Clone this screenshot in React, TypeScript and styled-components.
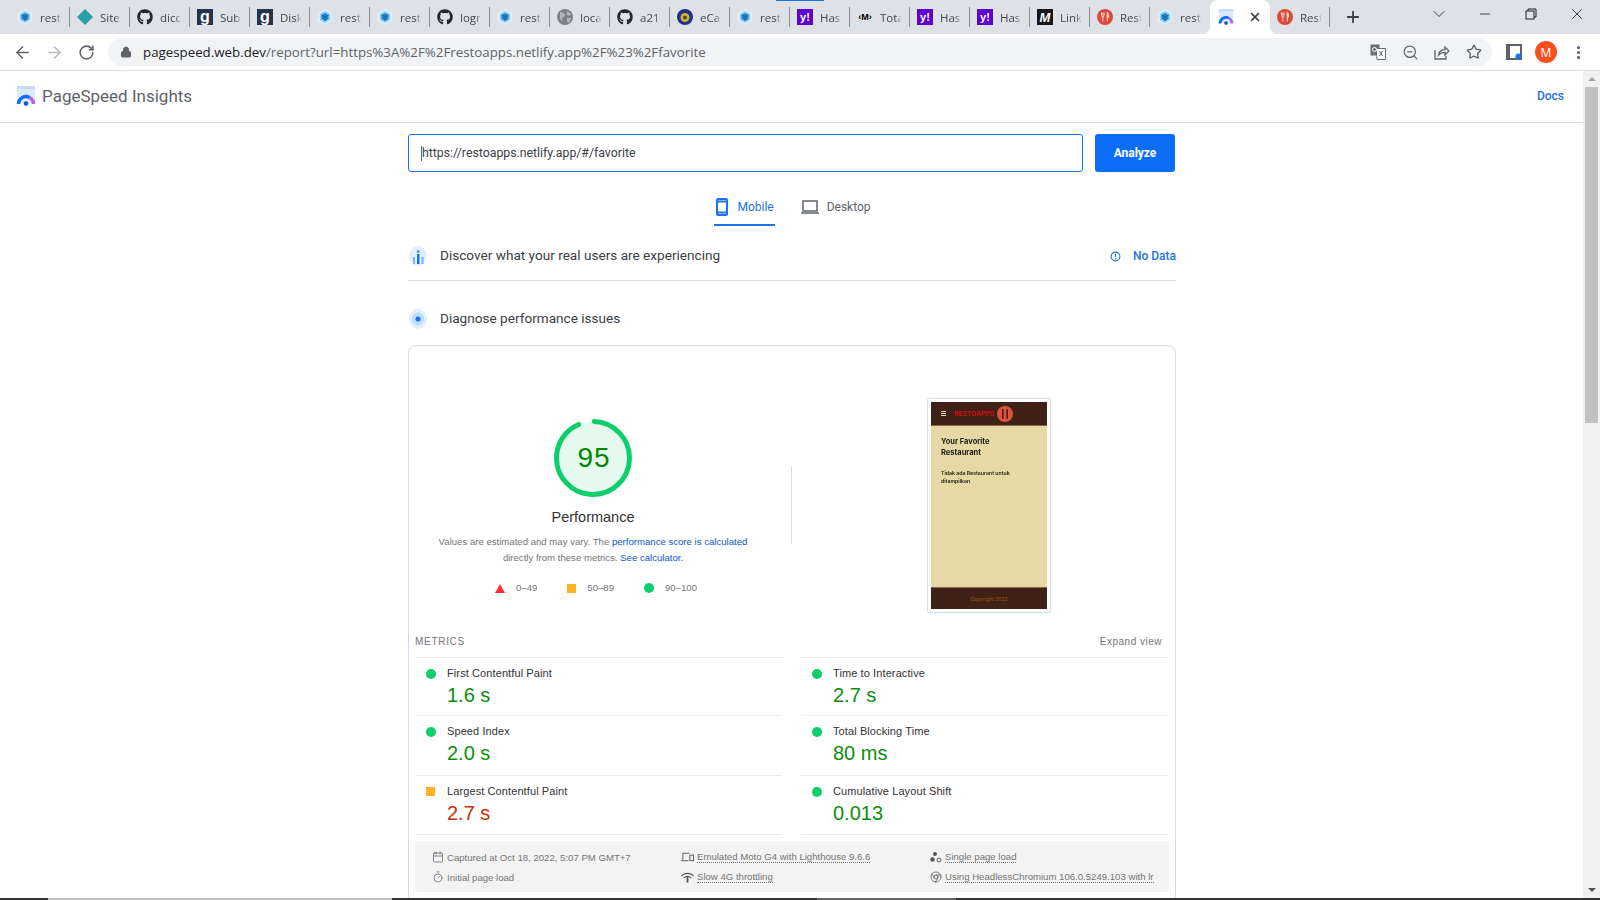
import styled, { createGlobalStyle } from "styled-components";
import { ArrowLeft, ArrowRight, Calendar, Chrome, ChevronDown, Lock, Minus, MoreVertical, Plus, RotateCw, Star, Timer, X, ZoomOut } from "lucide-react";
import { FaGithub } from "react-icons/fa";

const GlobalStyle = createGlobalStyle`
  html, body {
    margin: 0;
    padding: 0;
    overflow: hidden;
    background: #fff;
  }
  * {
    box-sizing: border-box;
  }
`;

type IconKind = "hex" | "diamond" | "github" | "g" | "globe" | "emblem" | "yahoo" | "tag" | "medium" | "resto";

const tabs: { icon: IconKind; label: string }[] = [
  { icon: "hex", label: "rest" },
  { icon: "diamond", label: "Site" },
  { icon: "github", label: "dicc" },
  { icon: "g", label: "Sub" },
  { icon: "g", label: "Disk" },
  { icon: "hex", label: "rest" },
  { icon: "hex", label: "rest" },
  { icon: "github", label: "logr" },
  { icon: "hex", label: "rest" },
  { icon: "globe", label: "loca" },
  { icon: "github", label: "a21" },
  { icon: "emblem", label: "eCa" },
  { icon: "hex", label: "rest" },
  { icon: "yahoo", label: "Has" },
  { icon: "tag", label: "Tota" },
  { icon: "yahoo", label: "Has" },
  { icon: "yahoo", label: "Has" },
  { icon: "medium", label: "Link" },
  { icon: "resto", label: "Rest" },
  { icon: "hex", label: "rest" },
];

function Favicon({ kind }: { kind: IconKind }) {
  switch (kind) {
    case "hex":
      return (
        <svg width="16" height="16" viewBox="0 0 16 16">
          <path d="M8 0l7 4v8l-7 4-7-4V4z" fill="#e3f4fd" />
          <path d="M8 1.800l5.400 3.100v6.200L8 14.200l-5.400-3.100V4.900z" fill="#8ed6fb" />
          <path d="M8 4l3.500 2v4L8 12l-3.500-2V6z" fill="#2a7fc6" />
          <path d="M4.500 6L8 8l3.500-2M8 8v4" fill="none" stroke="#13609f" strokeWidth="0.800" />
        </svg>
      );
    case "diamond":
      return (
        <svg width="16" height="16" viewBox="0 0 16 16">
          <path d="M8 0l8 8-8 8-8-8z" fill="#2b9fa8" />
        </svg>
      );
    case "github":
      return <FaGithub size={16} color="#24292f" />;
    case "g":
      return <GlyphSquare $bg="#25344b" $size={16}>g</GlyphSquare>;
    case "globe":
      return (
        <svg width="16" height="16" viewBox="0 0 16 16">
          <circle cx="8" cy="8" r="8" fill="#7d8084" />
          <path d="M3 3l4 1 1 3-3 2 1 4-3-3zM10 2l4 3-2 2-2-1zM10 9l4 0-2 5-2-1z" fill="#b5b7ba" />
        </svg>
      );
    case "emblem":
      return (
        <svg width="16" height="16" viewBox="0 0 16 16">
          <circle cx="8" cy="8" r="8" fill="#1d2f8f" />
          <circle cx="8" cy="8.500" r="4.500" fill="#d9b227" />
          <circle cx="8" cy="8.500" r="2" fill="#47502e" />
        </svg>
      );
    case "yahoo":
      return <GlyphSquare $bg="#5f01d1" $size={11}>y!</GlyphSquare>;
    case "tag":
      return <TagGlyph>‹M›</TagGlyph>;
    case "medium":
      return <GlyphSquare $bg="#15151a" $size={13} $italic>M</GlyphSquare>;
    case "resto":
      return (
        <svg width="16" height="16" viewBox="0 0 16 16">
          <circle cx="8" cy="8" r="8" fill="#dc4a38" />
          <path d="M5.800 3.500v9M4.500 3.500v3c0 1 .6 1.500 1.300 1.500s1.300-.5 1.300-1.500v-3" fill="none" stroke="#f6dfd6" strokeWidth="0.900" />
          <path d="M10.300 12.500v-9c1 .5 1.300 2 1.300 4.500h-1.300" fill="none" stroke="#f6dfd6" strokeWidth="1.100" />
        </svg>
      );
  }
}

function PsiLogo({ size }: { size: number }) {
  return (
    <svg width={size} height={size} viewBox="0 0 20 20">
      <rect x="1" y="0" width="18" height="17" rx="1.500" fill="#dcebfb" />
      <rect x="1" y="0" width="18" height="3" fill="#c6dcf5" />
      <path d="M2.500 18a7.500 7.500 0 0 1 11-6.600" fill="none" stroke="#0d6efd" strokeWidth="3.400" />
      <path d="M13.500 11.400a7.500 7.500 0 0 1 4 6.600" fill="none" stroke="#b264e8" strokeWidth="3.400" />
      <circle cx="10" cy="17.500" r="2.300" fill="#0b57d0" />
    </svg>
  );
}

function Gauge() {
  const r = 36.5;
  const c = 2 * Math.PI * r;
  return (
    <GaugeBox>
      <svg width="78" height="78" viewBox="0 0 78 78">
        <circle cx="39" cy="39" r={r} fill="#e6f9ef" />
        <circle
          cx="39"
          cy="39"
          r={r}
          fill="none"
          stroke="#0cce6b"
          strokeWidth="5"
          strokeLinecap="round"
          strokeDasharray={`${c * 0.95 - 5} ${c}`}
          transform="rotate(-88 39 39)"
        />
      </svg>
      <GaugeScore>95</GaugeScore>
    </GaugeBox>
  );
}

function Marker({ kind }: { kind: "pass" | "average" }) {
  return kind === "pass" ? <Dot /> : <Square />;
}

const metrics: { name: string; value: string; kind: "pass" | "average" }[] = [
  { name: "First Contentful Paint", value: "1.6 s", kind: "pass" },
  { name: "Time to Interactive", value: "2.7 s", kind: "pass" },
  { name: "Speed Index", value: "2.0 s", kind: "pass" },
  { name: "Total Blocking Time", value: "80 ms", kind: "pass" },
  { name: "Largest Contentful Paint", value: "2.7 s", kind: "average" },
  { name: "Cumulative Layout Shift", value: "0.013", kind: "pass" },
];

export default function App() {
  return (
    <Frame>
      <GlobalStyle />
      <TabStrip>
        <LoadingBar />
        {tabs.map((t, i) => (
          <Tab key={i} $noSep={i === tabs.length - 1}>
            <FaviconBox>
              <Favicon kind={t.icon} />
            </FaviconBox>
            <TabLabel>{t.label}</TabLabel>
          </Tab>
        ))}
        <ActiveTab>
          <FaviconBox>
            <PsiLogo size={18} />
          </FaviconBox>
          <X size={14} strokeWidth={3} color="#3c4043" />
        </ActiveTab>
        <Tab>
          <FaviconBox>
            <Favicon kind="resto" />
          </FaviconBox>
          <TabLabel>Rest</TabLabel>
        </Tab>
        <NewTab>
          <Plus size={18} strokeWidth={2.4} color="#3c4043" />
        </NewTab>
        <Grow />
        <WinButton>
          <ChevronDown size={20} strokeWidth={1.2} color="#3c4043" />
        </WinButton>
        <WinButton>
          <Minus size={16} strokeWidth={1.2} color="#202124" />
        </WinButton>
        <WinButton>
          <svg width="12" height="12" viewBox="0 0 12 12" fill="none" stroke="#202124">
            <rect x="1" y="3" width="8" height="8" />
            <path d="M3 3V1h8v8H9" />
          </svg>
        </WinButton>
        <WinButton>
          <X size={18} strokeWidth={1.1} color="#202124" />
        </WinButton>
      </TabStrip>

      <Toolbar>
        <ToolButton>
          <ArrowLeft size={19} color="#5f6368" strokeWidth={2} />
        </ToolButton>
        <ToolButton>
          <ArrowRight size={19} color="#b8babd" strokeWidth={2} />
        </ToolButton>
        <ToolButton>
          <RotateCw size={17} color="#5f6368" strokeWidth={2.200} />
        </ToolButton>
        <Omnibox>
          <Lock size={12} color="#5f6368" fill="#5f6368" />
          <UrlText>
            pagespeed.web.dev<UrlRest>/report?url=https%3A%2F%2Frestoapps.netlify.app%2F%23%2Ffavorite</UrlRest>
          </UrlText>
          <Grow />
          <ToolButton>
            <svg width="16" height="16" viewBox="0 0 16 16">
              <rect x="0.500" y="0.500" width="9" height="11" fill="#6b6e72" />
              <path d="M6 4.500h9.500v11H7z" fill="#fff" stroke="#6b6e72" />
              <path d="M9.500 7l3 5M12.500 7l-3 5" stroke="#6b6e72" />
              <circle cx="4.500" cy="5.500" r="2" fill="none" stroke="#fff" />
            </svg>
          </ToolButton>
          <ToolButton>
            <ZoomOut size={17} color="#5f6368" strokeWidth={1.7} />
          </ToolButton>
          <ToolButton>
            <svg width="16" height="16" viewBox="0 0 16 16" fill="none" stroke="#5f6368" strokeWidth="1.300">
              <path d="M1 6v9h11v-3" />
              <path d="M4.500 11c.5-3.500 3-5.300 6.500-5.300V3l4 4-4 4V8.300c-3 0-5 .8-6.500 2.700z" />
            </svg>
          </ToolButton>
          <ToolButton>
            <Star size={16} color="#5f6368" strokeWidth={2} />
          </ToolButton>
        </Omnibox>
        <ProfileArea>
          <ToolButton>
            <svg width="16" height="16" viewBox="0 0 16 16">
              <rect x="1" y="1" width="14" height="14" fill="none" stroke="#5f6368" strokeWidth="2" />
              <rect x="0" y="0" width="4" height="16" fill="#5f6368" />
              <circle cx="12.500" cy="12.500" r="3" fill="#1a73e8" />
            </svg>
          </ToolButton>
          <ToolButton>
            <Avatar>M</Avatar>
          </ToolButton>
          <ToolButton>
            <MoreVertical size={17} color="#5f6368" strokeWidth={2.500} />
          </ToolButton>
        </ProfileArea>
      </Toolbar>

      <Viewport>
        <Page>
          <Header>
            <PsiLogo size={20} />
            <Brand>PageSpeed Insights</Brand>
            <Grow />
            <DocsLink>Docs</DocsLink>
          </Header>
          <Content>
            <SearchRow>
              <SearchBox>
                <Caret />
                https://restoapps.netlify.app/#/favorite
              </SearchBox>
              <AnalyzeButton>Analyze</AnalyzeButton>
            </SearchRow>
            <DeviceTabs>
              <DeviceTab $active>
                <svg width="14" height="18" viewBox="0 0 14 18" fill="none" stroke="#1a73e8" strokeWidth="2">
                  <rect x="2" y="1" width="10" height="16" rx="1" />
                  <path d="M2 3.500h10M2 14.500h10" />
                </svg>
                Mobile
              </DeviceTab>
              <DeviceTab>
                <svg width="18" height="14" viewBox="0 0 18 14" fill="none" stroke="#5f6368" strokeWidth="1.500">
                  <rect x="2" y="1" width="14" height="10" />
                  <path d="M0 13h18" />
                </svg>
                Desktop
              </DeviceTab>
            </DeviceTabs>

            <SectionRow $bordered $top={20}>
              <svg width="18" height="20" viewBox="0 0 18 20">
                <ellipse cx="9" cy="10" rx="9" ry="10" fill="#e1effe" />
                <rect x="4" y="11" width="2" height="7" fill="#7ab8f5" />
                <rect x="8" y="8" width="2.500" height="10" fill="#1a73e8" />
                <rect x="12.500" y="11" width="2" height="7" fill="#7ab8f5" />
                <circle cx="9.200" cy="5.500" r="1.500" fill="#4a9af0" />
              </svg>
              <SectionTitle>Discover what your real users are experiencing</SectionTitle>
              <Grow />
              <NoData>
                <svg width="11" height="11" viewBox="0 0 12 12" fill="none" stroke="#1a73e8" strokeWidth="1.200">
                  <circle cx="6" cy="6" r="4.800" />
                  <path d="M6 3v3.600M6 8v1.200" />
                </svg>
                <NoDataText>No Data</NoDataText>
              </NoData>
            </SectionRow>

            <SectionRow $top={23}>
              <svg width="18" height="20" viewBox="0 0 18 20">
                <ellipse cx="9" cy="10" rx="9" ry="10" fill="#e1effe" />
                <ellipse cx="9" cy="10" rx="6" ry="6.500" fill="#bcdcfb" />
                <circle cx="9" cy="10" r="2.500" fill="#1a73e8" />
              </svg>
              <SectionTitle>Diagnose performance issues</SectionTitle>
            </SectionRow>

            <Card>
              <Summary>
                <ScorePanel>
                  <Gauge />
                  <ScoreTitle>Performance</ScoreTitle>
                  <ScoreNote>
                    Values are estimated and may vary. The <NoteLink>performance score is calculated</NoteLink>
                    <br />
                    directly from these metrics. <NoteLink>See calculator.</NoteLink>
                  </ScoreNote>
                  <Legend>
                    <LegendItem>
                      <svg width="10" height="9" viewBox="0 0 10 9">
                        <path d="M5 0l5 9H0z" fill="#ff3333" />
                      </svg>
                      0–49
                    </LegendItem>
                    <LegendItem>
                      <Square />
                      50–89
                    </LegendItem>
                    <LegendItem>
                      <Dot />
                      90–100
                    </LegendItem>
                  </Legend>
                </ScorePanel>
                <SummaryRule />
                <ShotFrame>
                  <ShotHeader>
                    <ShotBurger />
                    <ShotBrand>RESTOAPPS</ShotBrand>
                    <ShotLogo>
                      <svg width="16" height="16" viewBox="0 0 16 16">
                        <circle cx="8" cy="8" r="8" fill="#e0533a" />
                        <rect x="5" y="3" width="1.600" height="10" rx="0.800" fill="#3f2117" />
                        <rect x="9.400" y="3" width="1.600" height="10" rx="0.800" fill="#3f2117" />
                      </svg>
                    </ShotLogo>
                  </ShotHeader>
                  <ShotBody>
                    <ShotTitle>
                      Your Favorite
                      <br />
                      Restaurant
                    </ShotTitle>
                    <ShotText>
                      Tidak ada Restaurant untuk
                      <br />
                      ditampilkan
                    </ShotText>
                  </ShotBody>
                  <ShotFooter>Copyright 2022</ShotFooter>
                </ShotFrame>
              </Summary>

              <MetricsHead>
                <MetricsLabel>METRICS</MetricsLabel>
                <ExpandView>Expand view</ExpandView>
              </MetricsHead>
              <MetricsGrid>
                {metrics.map((m) => (
                  <Metric key={m.name}>
                    <MetricMarker>
                      <Marker kind={m.kind} />
                    </MetricMarker>
                    <MetricName>{m.name}</MetricName>
                    <MetricValue $kind={m.kind}>{m.value}</MetricValue>
                  </Metric>
                ))}
              </MetricsGrid>

              <MetaBox>
                <MetaItem>
                  <Calendar size={12} strokeWidth={1.400} />
                  Captured at Oct 18, 2022, 5:07 PM GMT+7
                </MetaItem>
                <MetaItem>
                  <svg width="13" height="10" viewBox="0 0 14 10" fill="none" stroke="#555" strokeWidth="1">
                    <path d="M2 8V1h7M0 9h8" />
                    <rect x="9.500" y="3" width="4" height="6" />
                  </svg>
                  <Dotted>Emulated Moto G4 with Lighthouse 9.6.6</Dotted>
                </MetaItem>
                <MetaItem>
                  <svg width="12" height="12" viewBox="0 0 12 12" fill="#555">
                    <circle cx="5" cy="3" r="2" />
                    <circle cx="2.500" cy="8.500" r="2.200" />
                    <circle cx="9" cy="9" r="2" fill="none" stroke="#555" />
                  </svg>
                  <Dotted>Single page load</Dotted>
                </MetaItem>
                <MetaItem>
                  <Timer size={12} strokeWidth={1.400} />
                  Initial page load
                </MetaItem>
                <MetaItem>
                  <svg width="13" height="11" viewBox="0 0 14 11" fill="none" stroke="#555" strokeWidth="1.300">
                    <path d="M0.500 3.500c4-3 9-3 13 0M3 6c2.500-2 5.500-2 8 0" />
                    <path d="M7 5v6" strokeWidth="2" />
                  </svg>
                  <Dotted>Slow 4G throttling</Dotted>
                </MetaItem>
                <MetaItem>
                  <Chrome size={12} strokeWidth={1.500} />
                  <Dotted>Using HeadlessChromium 106.0.5249.103 with lr</Dotted>
                </MetaItem>
              </MetaBox>
            </Card>
          </Content>
        </Page>
        <Scrollbar>
          <ScrollArrow />
          <ScrollThumb />
          <Grow />
          <ScrollArrow $down />
        </Scrollbar>
      </Viewport>
      <Taskbar>
        <TaskSegment $width={48} $color="#333" />
        <TaskSegment $width={344} $color="#bdbdbd" />
        <TaskSegment $width={425} $color="#333" />
        <TaskSegment $width={139} $color="#666" />
        <TaskSegment $width={644} $color="#333" />
      </Taskbar>
    </Frame>
  );
}

const Frame = styled.div`
  width: 1600px;
  height: 900px;
  display: flex;
  flex-direction: column;
  overflow: hidden;
  background: #fff;
`;

const Grow = styled.div`
  flex: 1;
`;

const TabStrip = styled.div`
  position: relative;
  height: 34px;
  flex: none;
  display: flex;
  align-items: stretch;
  padding-left: 10px;
  background: #dee1e6;
  font-family: "Open Sans", "Noto Sans", sans-serif;
`;

const LoadingBar = styled.div`
  position: absolute;
  top: 0;
  left: 776px;
  width: 48px;
  height: 1px;
  background: #1a73e8;
`;

const Tab = styled.div<{ $noSep?: boolean }>`
  position: relative;
  width: 60px;
  display: flex;
  align-items: center;
  padding-left: 7px;
  &::after {
    content: "";
    display: ${(p) => (p.$noSep ? "none" : "block")};
    position: absolute;
    right: 0;
    top: 7px;
    bottom: 7px;
    width: 1px;
    background: #8d9094;
  }
`;

const FaviconBox = styled.div`
  width: 16px;
  height: 16px;
  flex: none;
  display: flex;
  align-items: center;
  justify-content: center;
`;

const GlyphSquare = styled.div<{ $bg: string; $size: number; $italic?: boolean }>`
  width: 16px;
  height: 16px;
  display: flex;
  align-items: center;
  justify-content: center;
  background: ${(p) => p.$bg};
  color: #fff;
  font-family: "Liberation Sans", sans-serif;
  font-size: ${(p) => p.$size}px;
  font-weight: 700;
  font-style: ${(p) => (p.$italic ? "italic" : "normal")};
  line-height: 1;
`;

const TagGlyph = styled.div`
  color: #000;
  font-family: "Liberation Sans", sans-serif;
  font-size: 9px;
  font-weight: 700;
  white-space: nowrap;
`;

const TabLabel = styled.div`
  margin-left: 7px;
  width: 28px;
  white-space: nowrap;
  font-size: 11.500px;
  color: #45474a;
  -webkit-mask-image: linear-gradient(to right, #000 55%, transparent 78%);
  mask-image: linear-gradient(to right, #000 55%, transparent 78%);
`;

const ActiveTab = styled.div`
  position: relative;
  width: 60px;
  display: flex;
  align-items: center;
  justify-content: space-between;
  padding: 0 8px;
  background: #fff;
  border-radius: 8px 8px 0 0;
  &::before,
  &::after {
    content: "";
    position: absolute;
    bottom: 0;
    width: 8px;
    height: 8px;
  }
  &::before {
    left: -8px;
    background: radial-gradient(circle at 0 0, transparent 8px, #fff 8.500px);
  }
  &::after {
    right: -8px;
    background: radial-gradient(circle at 100% 0, transparent 8px, #fff 8.500px);
  }
`;

const NewTab = styled.div`
  width: 28px;
  margin-left: 9px;
  display: flex;
  align-items: center;
  justify-content: center;
`;

const WinButton = styled.div`
  width: 46px;
  height: 28px;
  display: flex;
  align-items: center;
  justify-content: center;
`;

const Toolbar = styled.div`
  height: 37px;
  flex: none;
  display: flex;
  align-items: flex-start;
  padding: 4px 6px 0;
  background: #fff;
  border-bottom: 1px solid #dadce0;
`;

const ToolButton = styled.div`
  width: 32px;
  height: 28px;
  flex: none;
  display: flex;
  align-items: center;
  justify-content: center;
`;

const Omnibox = styled.div`
  width: 1384px;
  height: 28px;
  margin-left: 6px;
  padding: 0 2px 0 12px;
  display: flex;
  align-items: center;
  background: #f1f3f4;
  border-radius: 14px;
`;

const UrlText = styled.div`
  margin-left: 11px;
  font-family: "Open Sans", "Noto Sans", sans-serif;
  font-size: 13.300px;
  color: #202124;
  white-space: nowrap;
`;

const UrlRest = styled.span`
  color: #5f6368;
`;

const ProfileArea = styled.div`
  margin-left: 6px;
  display: flex;
`;

const Avatar = styled.div`
  width: 22px;
  height: 22px;
  border-radius: 50%;
  display: flex;
  align-items: center;
  justify-content: center;
  background: #f4511e;
  color: #fff;
  font-family: "Open Sans", sans-serif;
  font-size: 12px;
`;

const Viewport = styled.div`
  flex: 1;
  min-height: 0;
  display: flex;
`;

const Page = styled.div`
  flex: 1;
  min-width: 0;
  overflow: hidden;
  font-family: Roboto, "Liberation Sans", sans-serif;
`;

const Header = styled.div`
  height: 52px;
  display: flex;
  align-items: center;
  padding: 0 19px 2px 16px;
  border-bottom: 1px solid #dadce0;
`;

const Brand = styled.div`
  margin-left: 6px;
  font-size: 17px;
  color: #5f6368;
`;

const DocsLink = styled.div`
  font-size: 12px;
  font-weight: 500;
  color: #1a73e8;
`;

const Content = styled.div`
  width: 768px;
  margin-left: 408px;
  padding-top: 11px;
`;

const SearchRow = styled.div`
  width: 767px;
  display: flex;
  gap: 12px;
`;

const SearchBox = styled.div`
  flex: 1;
  height: 38px;
  display: flex;
  align-items: center;
  padding-left: 12px;
  border: 1px solid #1a73e8;
  border-radius: 3px;
  font-size: 12.300px;
  color: #3c4043;
`;

const Caret = styled.span`
  width: 1px;
  height: 15px;
  background: #1a73e8;
`;

const AnalyzeButton = styled.div`
  width: 80px;
  height: 38px;
  display: flex;
  align-items: center;
  justify-content: center;
  background: #0b6cf5;
  border-radius: 3px;
  color: #fff;
  font-size: 12px;
  font-weight: 700;
`;

const DeviceTabs = styled.div`
  margin-top: 17px;
  display: flex;
  justify-content: center;
  gap: 26px;
  padding-left: 15px;
`;

const DeviceTab = styled.div<{ $active?: boolean }>`
  height: 37px;
  display: flex;
  align-items: center;
  gap: 8px;
  margin-left: ${(p) => (p.$active ? "-13px" : "0")};
  padding: 0 1px 0 ${(p) => (p.$active ? "1px" : "0")};
  font-size: 12px;
  color: ${(p) => (p.$active ? "#1a73e8" : "#5f6368")};
  border-bottom: 2px solid ${(p) => (p.$active ? "#1a73e8" : "transparent")};
`;

const SectionRow = styled.div<{ $bordered?: boolean; $top: number }>`
  height: ${(p) => (p.$bordered ? "35px" : "30px")};
  margin-top: ${(p) => p.$top}px;
  display: flex;
  align-items: ${(p) => (p.$bordered ? "flex-start" : "center")};
  border-bottom: ${(p) => (p.$bordered ? "1px solid #dadce0" : "none")};
  padding-left: 1px;
`;

const SectionTitle = styled.div`
  margin: 0 0 2px 13px;
  font-size: 13.600px;
  line-height: 18px;
  color: #3c4043;
`;

const NoData = styled.div`
  display: flex;
  align-items: center;
  height: 20px;
  gap: 12px;
`;

const NoDataText = styled.div`
  font-size: 12px;
  font-weight: 500;
  color: #1a73e8;
`;

const Card = styled.div`
  margin-top: 11px;
  height: 600px;
  border: 1px solid #dadce0;
  border-radius: 8px;
  font-family: "Liberation Sans", Arial, sans-serif;
`;

const Summary = styled.div`
  height: 285px;
  display: flex;
  align-items: flex-start;
`;

const ScorePanel = styled.div`
  width: 368px;
  padding-top: 73px;
  display: flex;
  flex-direction: column;
  align-items: center;
`;

const GaugeBox = styled.div`
  position: relative;
  width: 78px;
  height: 78px;
`;

const GaugeScore = styled.div`
  position: absolute;
  inset: 0;
  display: flex;
  align-items: center;
  justify-content: center;
  padding-left: 2px;
  font-size: 28px;
  letter-spacing: 1px;
  color: #008800;
`;

const ScoreTitle = styled.div`
  margin-top: 10px;
  font-size: 14.500px;
  line-height: 20px;
  color: #333;
`;

const ScoreNote = styled.div`
  margin-top: 7px;
  font-size: 9.600px;
  line-height: 16px;
  text-align: center;
  color: #757575;
`;

const NoteLink = styled.span`
  color: #0b57d0;
`;

const Legend = styled.div`
  margin-top: 16px;
  display: flex;
  gap: 30px;
  padding-left: 6px;
`;

const LegendItem = styled.div`
  display: flex;
  align-items: center;
  gap: 11px;
  font-size: 9.600px;
  line-height: 12px;
  color: #757575;
`;

const Dot = styled.span`
  display: block;
  width: 10px;
  height: 10px;
  border-radius: 50%;
  background: #0cce6b;
`;

const Square = styled.span`
  display: block;
  width: 9px;
  height: 9px;
  background: #ffa400;
  opacity: 0.85;
`;

const SummaryRule = styled.div`
  width: 1px;
  height: 77px;
  margin: 121px 0 0 14px;
  background: #dadce0;
`;

const ShotFrame = styled.div`
  width: 124px;
  height: 215px;
  margin: 52px 0 0 135px;
  padding: 3px;
  display: flex;
  flex-direction: column;
  border: 1px solid #dadce0;
  border-radius: 2px;
  font-family: Inter, "Open Sans", sans-serif;
`;

const ShotHeader = styled.div`
  height: 24px;
  flex: none;
  display: flex;
  align-items: center;
  padding-left: 10px;
  background: #3f2117;
  border-bottom: 1px solid #8a6a4a;
`;

const ShotBurger = styled.div`
  width: 5px;
  height: 5px;
  border-top: 1px solid #e6d9a6;
  border-bottom: 1px solid #e6d9a6;
  background: linear-gradient(#e6d9a6, #e6d9a6) center / 100% 1px no-repeat;
`;

const ShotBrand = styled.div`
  margin-left: 8px;
  font-size: 6.700px;
  font-weight: 700;
  color: #d10c0c;
`;

const ShotLogo = styled.div`
  margin-left: 3px;
  display: flex;
`;

const ShotBody = styled.div`
  flex: 1;
  padding: 10px 10px;
  background: #e6d9a6;
  color: #1c1a12;
`;

const ShotTitle = styled.div`
  font-size: 7.500px;
  font-weight: 700;
  line-height: 11px;
  filter: blur(0.2px);
`;

const ShotText = styled.div`
  margin-top: 11px;
  font-size: 5.200px;
  font-weight: 600;
  line-height: 8px;
  filter: blur(0.2px);
`;

const ShotFooter = styled.div`
  height: 22px;
  flex: none;
  display: flex;
  align-items: center;
  justify-content: center;
  background: #3f2117;
  border-top: 1px solid #8a6a4a;
  color: #a2591d;
  font-size: 5px;
`;

const MetricsHead = styled.div`
  height: 26px;
  display: flex;
  align-items: center;
  justify-content: space-between;
  padding: 0 13px 6px 6px;
  font-size: 10px;
  color: #757575;
`;

const MetricsLabel = styled.div`
  letter-spacing: 0.7px;
`;

const ExpandView = styled.div`
  letter-spacing: 0.500px;
`;

const MetricsGrid = styled.div`
  margin: 0 6px;
  display: grid;
  grid-template-columns: 367px 367px;
  grid-template-rows: 58px 60px 60px;
  column-gap: 19px;
`;

const Metric = styled.div`
  display: grid;
  grid-template-columns: 32px 1fr;
  grid-template-rows: 29px 16px;
  align-items: center;
  align-content: start;
  border-top: 1px solid #ebebeb;
  &:nth-last-child(-n + 2) {
    border-bottom: 1px solid #ebebeb;
  }
`;

const MetricMarker = styled.div`
  padding-left: 11px;
  padding-top: 2px;
`;

const MetricName = styled.div`
  font-size: 11px;
  letter-spacing: 0.100px;
  color: #333;
`;

const MetricValue = styled.div<{ $kind: string }>`
  grid-column: 2;
  font-size: 20px;
  line-height: 16px;
  color: ${(p) => (p.$kind === "pass" ? "#0c8f0c" : "#c33300")};
`;

const MetaBox = styled.div`
  margin: 6px 6px 0;
  height: 51px;
  padding: 6px 0 0 17px;
  display: grid;
  grid-template-columns: 249px 249px 1fr;
  grid-template-rows: 20px 20px;
  background: #f3f3f3;
  border-radius: 3px;
`;

const MetaItem = styled.div`
  min-width: 0;
  display: flex;
  align-items: center;
  gap: 3px;
  font-size: 9.600px;
  color: #757575;
  white-space: nowrap;
  svg {
    flex: none;
    color: #555;
  }
`;

const Dotted = styled.span`
  line-height: 11px;
  border-bottom: 1px dotted #757575;
`;

const Scrollbar = styled.div`
  width: 17px;
  flex: none;
  display: flex;
  flex-direction: column;
  align-items: center;
  background: #f1f1f1;
`;

const ScrollArrow = styled.div<{ $down?: boolean }>`
  width: 0;
  height: 0;
  margin: 6px 0;
  border-left: 4px solid transparent;
  border-right: 4px solid transparent;
  border-${(p) => (p.$down ? "top" : "bottom")}: 4px solid ${(p) => (p.$down ? "#505050" : "#a3a3a3")};
`;

const ScrollThumb = styled.div`
  width: 13px;
  height: 336px;
  background: #c1c1c1;
`;

const Taskbar = styled.div`
  height: 2px;
  flex: none;
  display: flex;
`;

const TaskSegment = styled.div<{ $width: number; $color: string }>`
  width: ${(p) => p.$width}px;
  background: ${(p) => p.$color};
`;
